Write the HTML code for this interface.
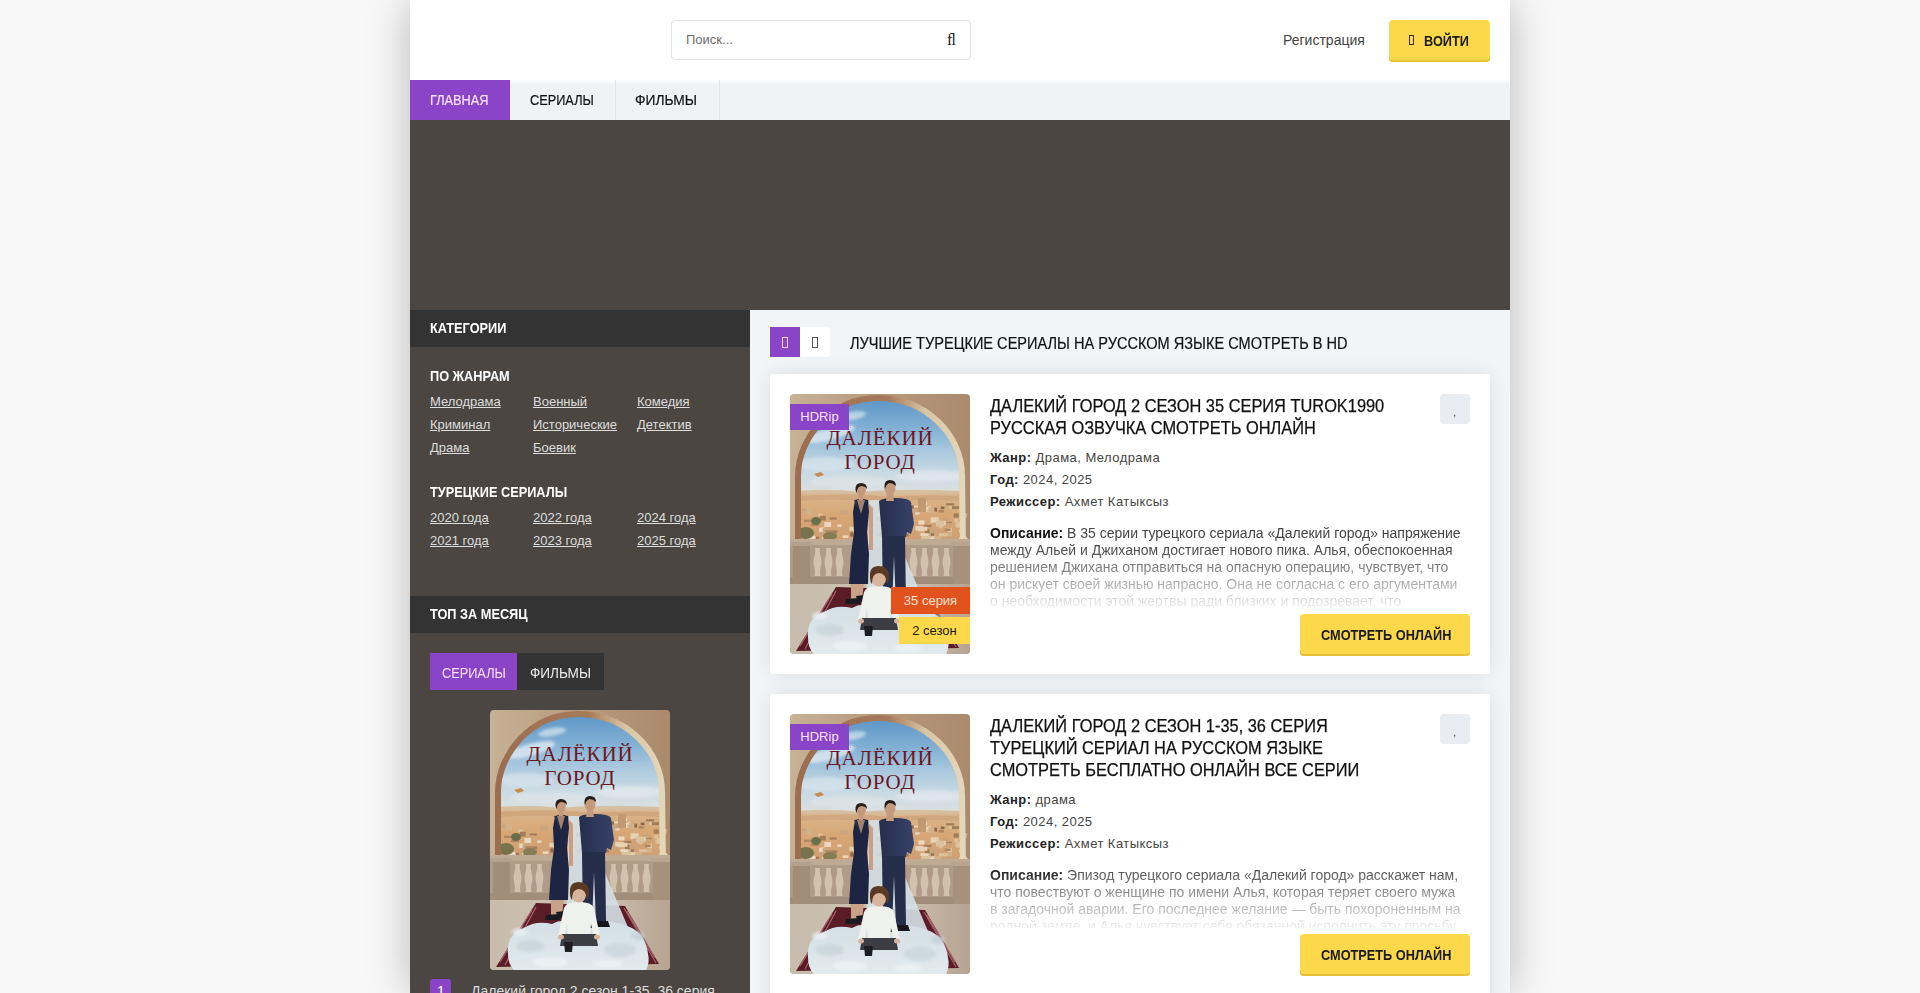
<!DOCTYPE html>
<html lang="ru"><head><meta charset="utf-8"><title>Турецкие сериалы</title>
<style>
*{box-sizing:border-box;margin:0;padding:0}
html,body{width:1920px;height:993px;overflow:hidden}
body{background:#f8f8f8;font-family:"Liberation Sans",sans-serif;color:#222;position:relative}
.abs{position:absolute}
.cx{display:inline-block;transform:scaleX(.91);transform-origin:0 0;white-space:nowrap}
.wrap{position:absolute;left:410px;top:0;width:1100px;height:993px;background:#fff;box-shadow:0 0 40px rgba(0,0,0,.26)}
.header{position:absolute;left:0;top:0;width:1100px;height:80px;background:#fff}
.search{position:absolute;left:261px;top:20px;width:300px;height:40px;border:1px solid #e3e3e3;border-radius:4px;background:#fff}
.search .ph{position:absolute;left:14px;top:12px;font-size:13px;color:#6b6b6b;line-height:14px}
.search .ic{position:absolute;left:275px;top:10px;font-family:"Liberation Serif",serif;font-size:16px;color:#222;line-height:18px}
.reg{position:absolute;left:873px;top:32px;font-size:14px;color:#444;line-height:16px}
.login{position:absolute;left:979px;top:20px;width:101px;height:42px;background:#fcd84a;border-radius:4px;box-shadow:inset 0 -2px 0 #e6bf36}
.login .ic{position:absolute;left:20px;top:15px;width:5px;height:10px;border:1px solid #333}
.login .tx{position:absolute;left:35px;top:13px;font-size:14px;font-weight:bold;color:#1a1a1a;line-height:16px}
.nav{position:absolute;left:0;top:80px;width:1100px;height:40px;background:linear-gradient(#fbfcfd,#eff3f6 5px)}
.ni{position:absolute;top:0;height:40px}
.nt{position:absolute;top:12px;font-size:14px;line-height:16px;color:#111;-webkit-text-stroke:.2px currentColor}
.banner{position:absolute;left:0;top:120px;width:1100px;height:190px;background:#4b4641}
.side{position:absolute;left:0;top:310px;width:340px;height:683px;background:#4b4641}
.shead{position:absolute;left:0;width:340px;height:37px;background:#333;color:#fff;font-size:14px;font-weight:bold;line-height:37px;padding-left:20px}
.stitle{position:absolute;left:20px;color:#fff;font-size:14px;font-weight:bold;line-height:16px}
.slink{position:absolute;color:#ddd;font-size:13px;line-height:16px;text-decoration:underline}
.tt{position:absolute;font-size:14px;line-height:16px}
.main{position:absolute;left:340px;top:310px;width:760px;height:683px;background:#f1f5f7}
.card{position:absolute;left:20px;width:720px;background:#fff;border-radius:4px;box-shadow:0 0 20px rgba(0,0,0,.09)}
.poster{position:absolute;left:20px;top:20px;width:180px;height:260px;border-radius:4px;overflow:hidden}
.poster svg{display:block}
.badge{position:absolute;font-size:13px;line-height:16px}
.ctitle{position:absolute;left:220px;top:21px;font-size:18px;line-height:22px;color:#111;-webkit-text-stroke:.25px #111}
.info{position:absolute;left:220px;font-size:13px;letter-spacing:.45px;line-height:16px;color:#444;white-space:nowrap;margin-top:1px}
.info b{color:#222;font-weight:bold}
.desc{position:absolute;left:220px;width:490px;overflow:hidden;white-space:nowrap;font-size:14px;line-height:17px;color:#444;-webkit-mask-image:linear-gradient(to top,rgba(0,0,0,.07) 0,#000 62px);mask-image:linear-gradient(to top,rgba(0,0,0,.07) 0,#000 62px)}
.desc b{color:#111}
.watch{position:absolute;left:530px;width:170px;height:42px;background:#fcd84a;border-radius:4px;box-shadow:inset 0 -2px 0 #e6bf36;font-size:14px;font-weight:bold;color:#1a1a1a;line-height:16px;padding:13px 0 0 21px}
.fav{position:absolute;left:670px;top:20px;width:30px;height:30px;background:#e9edf1;border-radius:4px}
.fav span{position:absolute;left:13px;top:12px;font-size:11px;color:#444;line-height:12px}
</style></head>
<body>
<svg width="0" height="0" style="position:absolute">
<defs>
<linearGradient id="sky" gradientUnits="userSpaceOnUse" x1="0" y1="4" x2="0" y2="100"><stop offset="0" stop-color="#5d95c5"/><stop offset=".3" stop-color="#80afd4"/><stop offset=".55" stop-color="#a9c8de"/><stop offset=".8" stop-color="#cbdbe4"/><stop offset="1" stop-color="#dbe0df"/></linearGradient>
<linearGradient id="stone" x1="0" y1="0" x2="1" y2="0">
<stop offset="0" stop-color="#c6b296"/><stop offset=".45" stop-color="#b99c7e"/><stop offset="1" stop-color="#ab8a6c"/>
</linearGradient>
<linearGradient id="desert" x1="0" y1="0" x2="0" y2="1"><stop offset="0" stop-color="#d5c3a8"/><stop offset=".15" stop-color="#dab48a"/><stop offset=".55" stop-color="#d7a674"/><stop offset="1" stop-color="#cf9f74"/></linearGradient>
<linearGradient id="floor" x1="0" y1="0" x2="1" y2="0">
<stop offset="0" stop-color="#c8bcac"/><stop offset=".6" stop-color="#cdc1b2"/><stop offset="1" stop-color="#b7a390"/>
</linearGradient>
<linearGradient id="suit" x1="0" y1="0" x2="1" y2="0">
<stop offset="0" stop-color="#262e4c"/><stop offset="1" stop-color="#36426a"/>
</linearGradient>
<linearGradient id="veil" x1="0" y1="0" x2="0" y2="1">
<stop offset="0" stop-color="#d3dfe5"/><stop offset="1" stop-color="#e2eaed"/>
</linearGradient>
<linearGradient id="band" gradientUnits="userSpaceOnUse" x1="8" y1="0" x2="172" y2="0"><stop offset="0" stop-color="#9c6e50"/><stop offset=".55" stop-color="#a77a58"/><stop offset=".78" stop-color="#d8c6a6"/><stop offset="1" stop-color="#e4d6b8"/></linearGradient>
<filter id="bl" x="-30%" y="-30%" width="160%" height="160%"><feGaussianBlur stdDeviation="1.5"/></filter>
<filter id="bl2" x="-20%" y="-20%" width="140%" height="140%"><feGaussianBlur stdDeviation=".5"/></filter>
<symbol id="pst" viewBox="0 0 180 260">
<rect width="180" height="260" fill="url(#stone)"/>
<path d="M8 260 L8 82 C8 45 40 4 88 4 C135 4 172 40 172 82 L173 260 Z" fill="url(#sky)"/>
<g filter="url(#bl)">
<ellipse cx="40" cy="40" rx="26" ry="6" fill="#e4eef3" opacity=".75" transform="rotate(-15 40 40)"/>
<ellipse cx="62" cy="22" rx="14" ry="4" fill="#e9f1f4" opacity=".6" transform="rotate(-10 62 22)"/>
<ellipse cx="35" cy="70" rx="28" ry="7" fill="#dde8ee" opacity=".6"/>
<ellipse cx="140" cy="82" rx="34" ry="6" fill="#e2eaee" opacity=".7"/><ellipse cx="60" cy="88" rx="40" ry="6" fill="#e0e6e8" opacity=".6"/>
</g>
<path d="M8 97 Q40 94 70 98 Q110 94 172 97 L172 146 L8 146 Z" fill="url(#desert)"/>
<g filter="url(#bl2)">
<path d="M8 102 Q60 98 100 103 Q140 100 172 102 L172 107 Q120 104 90 108 Q50 104 8 107 Z" fill="#c89c72" opacity=".55"/>
<rect x="122.7" y="111.7" width="6.9" height="2.3" fill="#ead9c0"/>
<rect x="140.8" y="140.6" width="4.3" height="2.3" fill="#dcc19d"/>
<rect x="106.3" y="122.1" width="8.0" height="2.5" fill="#c9a47c"/>
<rect x="166.3" y="127.9" width="5.4" height="5.9" fill="#dcc19d"/>
<rect x="120.3" y="111.5" width="3.7" height="3.2" fill="#8d6a4c"/>
<rect x="107.2" y="127.7" width="4.1" height="2.4" fill="#9f7a58"/>
<rect x="143.3" y="124.9" width="6.2" height="5.1" fill="#d2b18a"/>
<rect x="125.3" y="115.4" width="4.1" height="5.1" fill="#ead9c0"/>
<rect x="136.8" y="139.3" width="7.4" height="3.2" fill="#9f7a58"/>
<rect x="135.8" y="112.3" width="5.1" height="5.7" fill="#e6d3b6"/>
<rect x="153.5" y="127.8" width="8.3" height="3.3" fill="#a27c59"/>
<rect x="140.6" y="123.3" width="8.0" height="5.8" fill="#e6d3b6"/>
<rect x="104.2" y="132.7" width="6.9" height="6.0" fill="#b08860"/>
<rect x="150.2" y="139.7" width="5.1" height="5.8" fill="#c9a47c"/>
<rect x="108.2" y="108.2" width="7.6" height="2.5" fill="#d2b18a"/>
<rect x="164.2" y="124.9" width="4.0" height="3.6" fill="#dcc19d"/>
<rect x="157.3" y="138.8" width="4.7" height="3.7" fill="#d2b18a"/>
<rect x="167.0" y="111.7" width="4.1" height="2.9" fill="#d2b18a"/>
<rect x="158.2" y="112.9" width="4.7" height="2.6" fill="#c9a47c"/>
<rect x="139.6" y="142.2" width="7.1" height="4.1" fill="#e6d3b6"/>
<rect x="132.0" y="139.1" width="8.7" height="4.7" fill="#d2b18a"/>
<rect x="127.9" y="109.9" width="6.8" height="2.2" fill="#dcc19d"/>
<rect x="130.8" y="110.2" width="6.6" height="2.4" fill="#c9a47c"/>
<rect x="107.1" y="119.8" width="3.2" height="5.5" fill="#dcc19d"/>
<rect x="144.4" y="142.3" width="6.6" height="3.9" fill="#d2b18a"/>
<rect x="169.5" y="123.7" width="5.9" height="2.3" fill="#ead9c0"/>
<rect x="151.8" y="124.2" width="7.2" height="4.1" fill="#c9a47c"/>
<rect x="125.3" y="132.2" width="8.5" height="5.0" fill="#e6d3b6"/>
<rect x="148.7" y="115.9" width="5.2" height="2.7" fill="#b08860"/>
<rect x="144.6" y="129.3" width="7.7" height="5.0" fill="#dcc19d"/>
<rect x="157.3" y="134.1" width="4.4" height="4.1" fill="#e6d3b6"/>
<rect x="169.3" y="136.0" width="5.8" height="2.8" fill="#ead9c0"/>
<rect x="131.3" y="141.6" width="8.9" height="5.8" fill="#dcc19d"/>
<rect x="107.2" y="123.9" width="5.0" height="3.9" fill="#9f7a58"/>
<rect x="133.6" y="130.8" width="7.8" height="2.3" fill="#a27c59"/>
<rect x="154.8" y="134.5" width="5.9" height="2.7" fill="#b08860"/>
<rect x="106.1" y="142.0" width="7.3" height="3.9" fill="#9f7a58"/>
<rect x="150.7" y="112.5" width="3.8" height="2.6" fill="#8d6a4c"/>
<rect x="142.8" y="128.6" width="5.8" height="5.7" fill="#c9a47c"/>
<rect x="109.2" y="106.5" width="8.8" height="4.6" fill="#dcc19d"/>
<rect x="130.4" y="139.1" width="8.0" height="2.8" fill="#ead9c0"/>
<rect x="135.1" y="135.0" width="5.0" height="4.2" fill="#9f7a58"/>
<rect x="163.7" y="119.4" width="5.7" height="4.3" fill="#a27c59"/>
<rect x="157.9" y="139.4" width="3.8" height="2.6" fill="#d2b18a"/>
<rect x="154.4" y="129.1" width="7.7" height="2.6" fill="#c9a47c"/>
<rect x="150.8" y="127.1" width="5.0" height="4.1" fill="#e6d3b6"/>
<rect x="161.8" y="108.2" width="4.1" height="2.2" fill="#d2b18a"/>
<rect x="139.3" y="134.9" width="8.5" height="3.8" fill="#c9a47c"/>
<rect x="142.4" y="113.6" width="4.7" height="4.0" fill="#8d6a4c"/>
<rect x="148.9" y="139.3" width="8.7" height="3.0" fill="#dcc19d"/>
<rect x="158.8" y="111.2" width="3.7" height="3.8" fill="#dcc19d"/>
<rect x="130.0" y="114.1" width="4.8" height="2.5" fill="#b08860"/>
<rect x="110.0" y="139.5" width="8.8" height="2.9" fill="#a27c59"/>
<rect x="161.9" y="112.2" width="7.0" height="2.9" fill="#a27c59"/>
<rect x="123.7" y="113.4" width="4.9" height="4.9" fill="#c9a47c"/>
<rect x="132.1" y="132.7" width="5.3" height="4.1" fill="#e6d3b6"/>
<rect x="107.9" y="140.9" width="4.4" height="5.5" fill="#ead9c0"/>
<rect x="102.8" y="135.6" width="4.6" height="2.5" fill="#ead9c0"/>
<rect x="128.4" y="126.4" width="6.1" height="4.0" fill="#ead9c0"/>
<rect x="104.0" y="132.2" width="5.6" height="2.3" fill="#9f7a58"/>
<rect x="156.1" y="109.2" width="8.1" height="2.3" fill="#a27c59"/>
<rect x="100.8" y="143.8" width="5.5" height="5.7" fill="#e6d3b6"/>
<rect x="136.9" y="115.1" width="3.7" height="2.6" fill="#dcc19d"/>
<rect x="165.3" y="129.9" width="6.2" height="2.8" fill="#dcc19d"/>
<rect x="118.9" y="136.5" width="9.0" height="2.1" fill="#c9a47c"/>
<rect x="138.6" y="113.2" width="5.8" height="5.7" fill="#d2b18a"/>
<rect x="146.0" y="126.7" width="8.3" height="5.9" fill="#dcc19d"/>
<rect x="168.8" y="119.0" width="8.0" height="4.8" fill="#d2b18a"/>
<rect x="169.3" y="143.3" width="8.0" height="2.1" fill="#ead9c0"/>
<rect x="130.2" y="108.1" width="7.0" height="3.5" fill="#ead9c0"/>
<rect x="63.1" y="134.8" width="3.2" height="2.6" fill="#e6d3b6"/>
<rect x="32.2" y="142.9" width="7.9" height="3.6" fill="#ead9c0"/>
<rect x="28.0" y="119.5" width="4.7" height="2.3" fill="#dcc19d"/>
<rect x="30.8" y="137.3" width="3.5" height="4.5" fill="#c9a47c"/>
<rect x="11.8" y="114.7" width="4.5" height="2.7" fill="#c9a47c"/>
<rect x="86.5" y="118.7" width="7.5" height="4.4" fill="#ead9c0"/>
<rect x="74.3" y="128.8" width="4.4" height="3.9" fill="#c9a47c"/>
<rect x="65.7" y="136.0" width="7.1" height="2.4" fill="#c9a47c"/>
<rect x="60.3" y="138.4" width="3.1" height="4.1" fill="#8d6a4c"/>
<rect x="15.8" y="115.3" width="6.2" height="4.9" fill="#d2b18a"/>
<rect x="59.4" y="132.8" width="6.1" height="4.0" fill="#e6d3b6"/>
<rect x="50.0" y="116.1" width="7.7" height="4.7" fill="#c9a47c"/>
<rect x="14.1" y="136.1" width="4.3" height="2.2" fill="#dcc19d"/>
<rect x="29.2" y="133.5" width="5.3" height="4.5" fill="#ead9c0"/>
<rect x="78.6" y="132.5" width="6.2" height="2.2" fill="#ead9c0"/>
<rect x="67.9" y="134.8" width="6.1" height="2.4" fill="#d2b18a"/>
<rect x="32.7" y="134.2" width="6.5" height="4.0" fill="#c9a47c"/>
<rect x="34.3" y="128.0" width="6.8" height="5.0" fill="#ead9c0"/>
<rect x="98.0" y="142.1" width="3.1" height="3.4" fill="#a27c59"/>
<rect x="99.4" y="125.6" width="7.6" height="4.8" fill="#e6d3b6"/>
<rect x="21.0" y="129.7" width="7.8" height="2.4" fill="#b08860"/>
<rect x="89.6" y="135.1" width="4.2" height="4.7" fill="#e6d3b6"/>
<rect x="22.6" y="142.5" width="6.4" height="3.2" fill="#a27c59"/>
<rect x="39.6" y="123.5" width="7.2" height="2.0" fill="#a27c59"/>
<rect x="19.0" y="141.8" width="6.6" height="4.7" fill="#ead9c0"/>
<rect x="14.0" y="125.7" width="7.3" height="2.2" fill="#b08860"/>
<rect x="86.6" y="122.4" width="3.3" height="4.0" fill="#8d6a4c"/>
<rect x="30.9" y="122.0" width="5.6" height="2.6" fill="#d2b18a"/>
<rect x="89.4" y="138.4" width="6.2" height="4.7" fill="#8d6a4c"/>
<rect x="74.2" y="115.5" width="6.7" height="3.4" fill="#b08860"/>
<rect x="52.7" y="141.4" width="5.8" height="2.5" fill="#ead9c0"/>
<rect x="35.4" y="136.2" width="7.9" height="2.8" fill="#b08860"/>
<rect x="52.5" y="134.1" width="3.6" height="3.9" fill="#c9a47c"/>
<rect x="91.3" y="128.9" width="4.1" height="4.7" fill="#a27c59"/>
<rect x="47.3" y="130.4" width="4.2" height="2.5" fill="#ead9c0"/>
<rect x="30.0" y="121.8" width="5.8" height="4.7" fill="#a27c59"/>
<rect x="43.2" y="136.4" width="4.1" height="2.8" fill="#a27c59"/>
<rect x="33.5" y="143.0" width="3.6" height="3.5" fill="#8d6a4c"/>
<rect x="16.5" y="140.9" width="4.9" height="3.9" fill="#ead9c0"/>
<rect x="86.1" y="140.2" width="3.1" height="2.1" fill="#a27c59"/>
<rect x="97.1" y="128.7" width="3.4" height="4.8" fill="#a27c59"/>
<rect x="97.4" y="121.5" width="3.5" height="2.5" fill="#e6d3b6"/>
<rect x="94.6" y="135.7" width="6.2" height="4.3" fill="#c9a47c"/>
<rect x="79.5" y="114.0" width="3.6" height="3.7" fill="#ead9c0"/>
<rect x="96.5" y="132.8" width="5.6" height="3.3" fill="#9f7a58"/>
<rect x="128" y="104" width="8" height="14" fill="#c19a72"/>
<ellipse cx="26" cy="127" rx="5" ry="4" fill="#6b6e48"/>
<ellipse cx="16" cy="139" rx="8" ry="6" fill="#76734d"/>
<ellipse cx="40" cy="142" rx="7" ry="4" fill="#857c55"/>
</g>
<path d="M8 260 L8 82 C8 45 40 4 88 4 C135 4 172 40 172 82 L173 150" fill="none" stroke="url(#band)" stroke-width="6"/>
<rect x="0" y="145" width="180" height="45" fill="#b09b86"/>
<rect x="0" y="145" width="180" height="6" fill="#bfaa93"/>
<g fill="#d2c2ad">
<path d="M25 154 h5 q-1 4 0.5 8 q2 6 0 12 q-1 4 0 8 h-6 q1-4 0-8 q-2-6 0-12 q1.5-4 0.5-8 z"/>
<path d="M36 154 h5 q-1 4 0.5 8 q2 6 0 12 q-1 4 0 8 h-6 q1-4 0-8 q-2-6 0-12 q1.5-4 0.5-8 z"/>
<path d="M47 154 h5 q-1 4 0.5 8 q2 6 0 12 q-1 4 0 8 h-6 q1-4 0-8 q-2-6 0-12 q1.5-4 0.5-8 z"/>
<path d="M121 154 h5 q-1 4 0.5 8 q2 6 0 12 q-1 4 0 8 h-6 q1-4 0-8 q-2-6 0-12 q1.5-4 0.5-8 z"/>
<path d="M132 154 h5 q-1 4 0.5 8 q2 6 0 12 q-1 4 0 8 h-6 q1-4 0-8 q-2-6 0-12 q1.5-4 0.5-8 z"/>
<path d="M143 154 h5 q-1 4 0.5 8 q2 6 0 12 q-1 4 0 8 h-6 q1-4 0-8 q-2-6 0-12 q1.5-4 0.5-8 z"/>
<path d="M154 154 h5 q-1 4 0.5 8 q2 6 0 12 q-1 4 0 8 h-6 q1-4 0-8 q-2-6 0-12 q1.5-4 0.5-8 z"/>
</g>
<rect x="0" y="183" width="180" height="7" fill="#a18d79"/>
<rect x="3" y="148" width="17" height="42" fill="#a28d78"/>
<rect x="1" y="148" width="21" height="4" fill="#b4a08b"/>
<rect x="163" y="148" width="17" height="42" fill="#a6917c"/>
<rect x="161" y="148" width="19" height="4" fill="#b8a48f"/>
<rect x="0" y="190" width="180" height="70" fill="url(#floor)"/>
<path d="M46 193 L135 196 L169 254 L6 257 Z" fill="#5a1d27"/>
<path d="M42 200 L10 252 M46 197 L15 255 M137 201 L165 248 M134 198 L166 253" stroke="#a8636b" stroke-width="1.2"/>
<path d="M79 106 L93 106 L118 170 L140 222 L76 222 Z" fill="#d5e0e6" opacity=".9" filter="url(#bl2)"/>
<path d="M18 244 Q16 224 34 218 Q46 210 62 214 Q72 208 84 213 L112 211 Q130 212 142 218 Q156 226 158 244 Q160 252 156 260 L24 260 Q18 254 18 244 Z" fill="url(#veil)" filter="url(#bl2)"/>
<g filter="url(#bl)" opacity=".8">
<ellipse cx="40" cy="236" rx="14" ry="6" fill="#c7d4db"/>
<ellipse cx="130" cy="240" rx="16" ry="7" fill="#c9d6dd"/>
<ellipse cx="60" cy="252" rx="18" ry="5" fill="#eef3f5"/>
<ellipse cx="118" cy="254" rx="14" ry="4" fill="#eef3f5"/>
<ellipse cx="30" cy="222" rx="8" ry="4" fill="#eaf0f2"/>
<ellipse cx="148" cy="226" rx="7" ry="4" fill="#c3d0d7"/>
</g>
<path d="M79 110 L83 114 L83 156 L79 156 Z" fill="#c99e82"/>
<path d="M61 189 L74 189 L72 205 L61 207 Z" fill="#c9a288"/>
<path d="M56 205 L69 204 L70 210 L55 210 Z M66 202 L74 201 L75 207 L68 208 Z" fill="#1a1a22"/>
<path d="M65 106 Q71 104 78 106 L79 118 L77 138 L79 160 L78 190 L59 190 L61 160 L64 138 L63 118 Z" fill="#1e2542"/><path d="M67 106 L71 120 L75 106 Z" fill="#c49a7c" opacity=".8"/>
<path d="M64 106 L70 118 L66 106 Z" fill="#2d3654"/>
<ellipse cx="71" cy="96" rx="5" ry="6" fill="#c49a7c"/>
<path d="M65.5 96 Q65 89 71 89 Q77 89 77 95 Q75 92 71 92 Q67 93 66.5 99 Z" fill="#2a1c16"/>
<rect x="69" y="101" width="4" height="5" fill="#c49a7c"/>
<path d="M89 107 Q92 104 105 104 Q119 104 121 108 L124 130 L121 140 L117 138 L116 143 L92 143 Z" fill="url(#suit)"/>
<path d="M92 142 L115 142 L116 212 L106 213 L104 162 L102 213 L93 213 Z" fill="#242d4a"/>
<path d="M91 211 L104 211 L104 218 L89 218 Z M105 211 L118 211 L120 217 L105 217 Z" fill="#15151b"/>
<ellipse cx="100" cy="94" rx="5.5" ry="7" fill="#c49a7c"/>
<path d="M94.5 93 Q94 86 100 86 Q106 86 106 92 Q103 89 99.5 89 Q96 90 95 95 Z" fill="#221a16"/>
<path d="M97 100 L103 100 L104 107 L96 107 Z" fill="#c49a7c"/>
<path d="M74 198 Q76 192 89 192 Q102 192 104 198 L110 226 L104 228 L101 214 L100 226 L78 226 L77 214 L74 228 L68 226 Z" fill="#eff1ed"/>
<path d="M72 224 L106 224 L108 236 L70 236 Z" fill="#3c3e43"/>
<path d="M74 232 L83 232 L82 242 L75 242 Z" fill="#1e1e22"/><ellipse cx="71" cy="227" rx="3" ry="2.5" fill="#d6b39a"/><ellipse cx="107" cy="227" rx="3" ry="2.5" fill="#d6b39a"/>
<ellipse cx="89" cy="185" rx="7" ry="7.5" fill="#d6b39a"/>
<path d="M80 183 Q79 172 89 172 Q99 172 99 182 Q99 188 97 190 Q96 179 89 179 Q82 179 82 190 Q80 188 80 183 Z" fill="#5a3a22"/>
<text x="90" y="51" text-anchor="middle" font-family="Liberation Serif" font-size="21" fill="#6b1622" letter-spacing=".9">ДАЛЁКИЙ</text>
<text x="90" y="74.5" text-anchor="middle" font-family="Liberation Serif" font-size="21" fill="#6b1622" letter-spacing=".9">ГОРОД</text>
<path d="M24 80 L31 78 L34 81 L28 83 Z" fill="#c88b4a"/>
</symbol>
</defs>
</svg>

<div class="wrap">
  <div class="header">
    <div class="search"><span class="ph">Поиск...</span><span class="ic">ﬂ</span></div>
    <div class="reg">Регистрация</div>
    <div class="login"><span class="ic"></span><span class="tx cx">ВОЙТИ</span></div>
  </div>
  <div class="nav">
    <div class="ni" style="left:0;width:100px;background:#8a44c8"></div>
    <div class="ni" style="left:100px;width:106px;border-right:1px solid #dfe3e7"></div>
    <div class="ni" style="left:206px;width:104px;border-right:1px solid #dfe3e7"></div>
    <span class="nt cx" style="left:20px;color:#fbe3ff">ГЛАВНАЯ</span>
    <span class="nt cx" style="left:120px">СЕРИАЛЫ</span>
    <span class="nt cx" style="left:225px;transform:scaleX(.985)">ФИЛЬМЫ</span>
  </div>
  <div class="banner"></div>

  <div class="side">
    <div class="shead" style="top:0"><span class="cx">КАТЕГОРИИ</span></div>
    <div class="stitle cx" style="top:58px">ПО ЖАНРАМ</div>
    <a class="slink" style="left:20px;top:84px">Мелодрама</a>
    <a class="slink" style="left:123px;top:84px">Военный</a>
    <a class="slink" style="left:227px;top:84px">Комедия</a>
    <a class="slink" style="left:20px;top:107px">Криминал</a>
    <a class="slink" style="left:123px;top:107px">Исторические</a>
    <a class="slink" style="left:227px;top:107px">Детектив</a>
    <a class="slink" style="left:20px;top:130px">Драма</a>
    <a class="slink" style="left:123px;top:130px">Боевик</a>
    <div class="stitle cx" style="top:174px">ТУРЕЦКИЕ СЕРИАЛЫ</div>
    <a class="slink" style="left:20px;top:200px">2020 года</a>
    <a class="slink" style="left:123px;top:200px">2022 года</a>
    <a class="slink" style="left:227px;top:200px">2024 года</a>
    <a class="slink" style="left:20px;top:223px">2021 года</a>
    <a class="slink" style="left:123px;top:223px">2023 года</a>
    <a class="slink" style="left:227px;top:223px">2025 года</a>
    <div class="shead" style="top:286px"><span class="cx">ТОП ЗА МЕСЯЦ</span></div>
    <div class="abs" style="left:20px;top:343px;width:87px;height:37px;background:#8a44c8"></div>
    <div class="abs" style="left:107px;top:343px;width:87px;height:37px;background:#333"></div>
    <span class="tt cx" style="left:32px;top:355px;color:#fbe3ff">СЕРИАЛЫ</span>
    <span class="tt cx" style="left:120px;top:355px;color:#eee;transform:scaleX(.97)">ФИЛЬМЫ</span>
    <div class="abs" style="left:80px;top:400px;width:180px;height:260px;border-radius:4px;overflow:hidden"><svg width="180" height="260"><use href="#pst"/></svg></div>
    <div class="abs" style="left:20px;top:669px;width:21px;height:24px;background:#8a44c8;border-radius:3px"></div>
    <span class="abs" style="left:27px;top:673px;color:#fff;font-size:14px;line-height:16px">1</span>
    <div class="abs" style="left:61px;top:673px;color:#ddd;font-size:14px;line-height:16px;white-space:nowrap">Далекий город 2 сезон 1-35, 36 серия</div>
  </div>

  <div class="main">
    <div class="abs" style="left:20px;top:17px;width:30px;height:30px;background:#8a44c8"><span class="abs" style="left:12px;top:10px;width:6px;height:11px;border:1px solid #f3d6ff"></span></div>
    <div class="abs" style="left:50px;top:17px;width:30px;height:30px;background:#fff;border-radius:0 4px 4px 0"><span class="abs" style="left:12px;top:10px;width:6px;height:11px;border:1px solid #555"></span></div>
    <div class="abs cx" style="left:100px;top:26px;font-size:16px;line-height:16px;color:#111;-webkit-text-stroke:.2px #111">ЛУЧШИЕ ТУРЕЦКИЕ СЕРИАЛЫ НА РУССКОМ ЯЗЫКЕ СМОТРЕТЬ В HD</div>

    <div class="card" style="top:64px;height:300px">
      <div class="poster"><svg width="180" height="260"><use href="#pst"/></svg>
        <div class="badge" style="left:0;top:10px;width:59px;height:26px;background:#8a44c8;color:#fbe3ff;line-height:26px;text-align:center">HDRip</div>
        <div class="badge" style="left:101px;top:193px;width:79px;height:27px;background:#e2521d;color:#ffe3d3;line-height:27px;text-align:center">35 серия</div>
        <div class="badge" style="left:109px;top:223px;width:71px;height:27px;background:#fcd84a;color:#1a1a1a;line-height:27px;text-align:center">2 сезон</div>
      </div>
      <div class="ctitle cx">ДАЛЕКИЙ ГОРОД 2 СЕЗОН 35 СЕРИЯ TUROK1990<br>РУССКАЯ ОЗВУЧКА СМОТРЕТЬ ОНЛАЙН</div>
      <div class="fav"><span>,</span></div>
      <div class="info" style="top:75px"><b>Жанр:</b> Драма, Мелодрама</div>
      <div class="info" style="top:97px"><b>Год:</b> 2024, 2025</div>
      <div class="info" style="top:119px"><b>Режиссер:</b> Ахмет Катыксыз</div>
      <div class="desc" style="top:151px;height:83px"><b>Описание:</b> В 35 серии турецкого сериала «Далекий город» напряжение<br>между Альей и Джиханом достигает нового пика. Алья, обеспокоенная<br>решением Джихана отправиться на опасную операцию, чувствует, что<br>он рискует своей жизнью напрасно. Она не согласна с его аргументами<br>о необходимости этой жертвы ради близких и подозревает, что</div>
      <div class="watch" style="top:240px"><span class="cx">СМОТРЕТЬ ОНЛАЙН</span></div>
    </div>

    <div class="card" style="top:384px;height:320px">
      <div class="poster"><svg width="180" height="260"><use href="#pst"/></svg>
        <div class="badge" style="left:0;top:10px;width:59px;height:26px;background:#8a44c8;color:#fbe3ff;line-height:26px;text-align:center">HDRip</div>
      </div>
      <div class="ctitle cx">ДАЛЕКИЙ ГОРОД 2 СЕЗОН 1-35, 36 СЕРИЯ<br>ТУРЕЦКИЙ СЕРИАЛ НА РУССКОМ ЯЗЫКЕ<br>СМОТРЕТЬ БЕСПЛАТНО ОНЛАЙН ВСЕ СЕРИИ</div>
      <div class="fav"><span>,</span></div>
      <div class="info" style="top:97px"><b>Жанр:</b> драма</div>
      <div class="info" style="top:119px"><b>Год:</b> 2024, 2025</div>
      <div class="info" style="top:141px"><b>Режиссер:</b> Ахмет Катыксыз</div>
      <div class="desc" style="top:173px;height:61px"><b>Описание:</b> Эпизод турецкого сериала «Далекий город» расскажет нам,<br>что повествуют о женщине по имени Алья, которая теряет своего мужа<br>в загадочной аварии. Его последнее желание — быть похороненным на<br>родной земле, и Алья чувствует себя обязанной исполнить эту просьбу</div>
      <div class="watch" style="top:240px"><span class="cx">СМОТРЕТЬ ОНЛАЙН</span></div>
    </div>
  </div>
</div>
</body></html>
